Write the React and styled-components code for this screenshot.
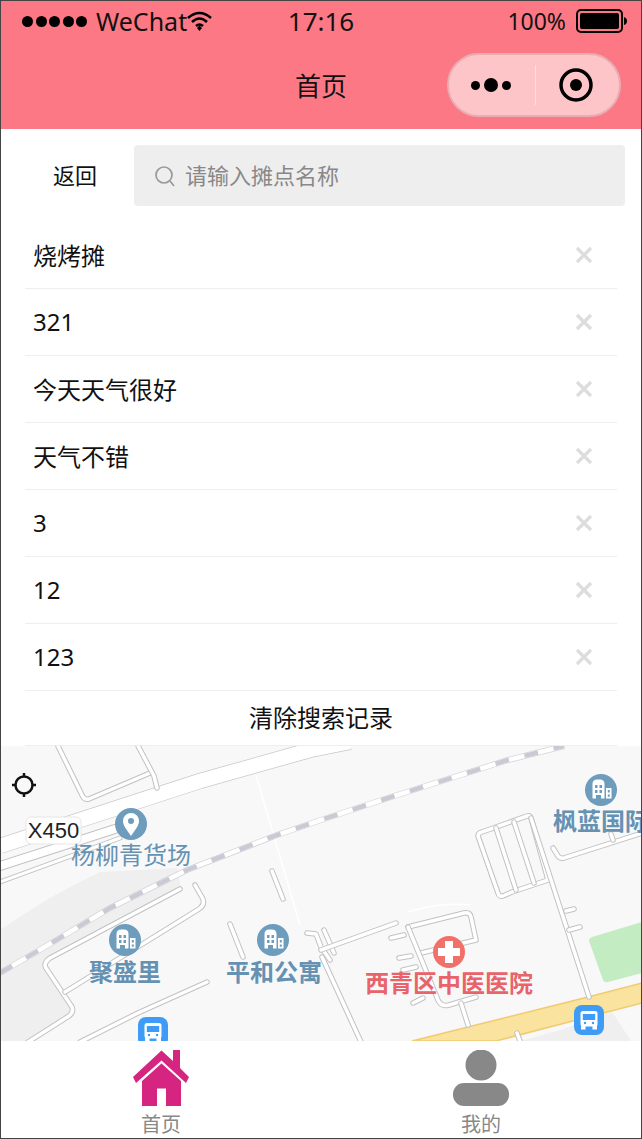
import React from "react";
import styled, { createGlobalStyle } from "styled-components";

const Global = createGlobalStyle`
  html, body { margin: 0; padding: 0; background: #fff; }
  body { font-family: "Noto Sans", "Noto Sans CJK SC", sans-serif; }
`;

const history = ["烧烤摊", "321", "今天天气很好", "天气不错", "3", "12", "123"];

const RAIL = "M0 973L43 948L110 908L187 870L277 835L321 820L388 798L508 760L564 746";

const Road = ({ d, w = 5.5 }) => (
  <>
    <path d={d} fill="none" stroke="#c2c2c4" strokeWidth={w} strokeLinecap="round" strokeLinejoin="round" />
    <path d={d} fill="none" stroke="#fff" strokeWidth={w - 2} strokeLinecap="round" strokeLinejoin="round" />
  </>
);

const Poi = ({ x, y, color = "#6e9cbd", children }) => (
  <g transform={`translate(${x} ${y})`}>
    <circle r="16" fill={color} />
    {children}
  </g>
);

const Building = () => (
  <path
    fill="#fff"
    fillRule="evenodd"
    d="M-8.5 8.5V-6Q-8.5 -10.5 -4 -10.5H-1Q3.5 -10.5 3.5 -6V8.5H0V5H-5V8.5ZM-6 -5V-2H-3.5V-5ZM-1.5 -5V-2H1V-5ZM-6 0V3H-3.5V0ZM-1.5 0V3H1V0ZM5 -2H10.5V8.5H5ZM6.8 0V2.5H8.8V0ZM6.8 4.5V6.8H8.8V4.5Z"
  />
);

const Bus = ({ x, y }) => (
  <g transform={`translate(${x} ${y})`}>
    <rect width="30" height="30" rx="8" fill="#3f9cf6" />
    <rect x="6.5" y="6" width="17" height="15.5" rx="2.5" fill="#fff" />
    <rect x="8.8" y="9" width="12.4" height="6" fill="#3f9cf6" />
    <path d="M7 21H11.5V24.5H7ZM18.5 21H23V24.5H18.5Z" fill="#fff" />
    <circle cx="11" cy="18" r="1.2" fill="#3f9cf6" />
    <circle cx="19" cy="18" r="1.2" fill="#3f9cf6" />
  </g>
);

const MapDrawing = () => (
  <MapSvg viewBox="1 746 640 295">
    <rect x="0" y="745" width="642" height="296" fill="#f8f8f9" />
    <path
      d="M0 930Q50 895 100 872L177 868L181 887L48 958L44 967L73 1008L70 1015L28 1041H0Z"
      fill="#efefef"
    />
    <path d="M521 1041L560 1030L612 1012L631 1041Z" fill="#efefef" />
    <path d="M589 941Q589 938 592 937L642 922V973L608 982Q604 983 603 980Z" fill="#c3ecc2" />
    <path d="M412 1041L588 997L642 983V1003L496 1041Z" fill="#fae29f" stroke="#f0cb70" strokeWidth="1.5" />

    <path d="M0 846L200 781L310 750L350 742" fill="none" stroke="#c8c8ca" strokeWidth="16" />
    <path d="M0 846L200 781L310 750L350 742" fill="none" stroke="#fff" strokeWidth="14.5" />
    <path d="M256 775L300 925" fill="none" stroke="#fff" strokeWidth="1.5" />
    <path d="M408 912Q440 902 470 905" fill="none" stroke="#fff" strokeWidth="1.5" />

    <Road d="M57 744L83 797Q85 800 89 799L150 773" />
    <Road d="M137 744L154 776L157 788" />
    <Road d="M0 866L115 829" w={10} />
    <Road d="M0 882L120 838" w={5} />
    <Road d="M180 889L50 958Q43 963 46 968L72 1007Q74 1012 69 1016L28 1042" />
    <Road d="M195 885L203 899Q205 905 199 909L65 992" />
    <Road d="M207 982L138 1013L80 1042" />
    <Road d="M272 871L283 899" />
    <Road d="M230 924L243 957" />
    <Road d="M307 933L316 934L321 947L330 960" />
    <Road d="M324 930L334 953" />
    <Road d="M321 950L396 923" />
    <Road d="M322 957L361 1042" />
    <Road d="M391 938L404 935" />
    <Road d="M399 958L411 956" />
    <Road d="M403 970L416 967" />
    <Road d="M413 1003L423 998" />
    <Road d="M408 927L464 913Q470 912 471 917L476 940L421 953" />
    <Road d="M408 927L438 1000Q441 1007 449 1005L476 997" />
    <Road d="M461 1003L468 1025" />
    <Road d="M478 836Q478 833 482 832L527 816Q530 815 531 818L548 880L512 892L503 896Q499 897 498 893Z" />
    <Road d="M496 828L516 890" />
    <Road d="M514 822L534 883" />
    <Road d="M531 818L589 997" />
    <Road d="M566 911L574 909" />
    <Road d="M569 930L580 927" />
    <Road d="M553 848L558 856Q560 859 564 858L642 833" />
    <Road d="M611 834L613 840" />
    <Road d="M520 1041L517 1033" />

    <path d={RAIL} fill="none" stroke="#d4d4d8" strokeWidth="6" />
    <path d={RAIL} fill="none" stroke="#fff" strokeWidth="4.5" />
    <path d={RAIL} fill="none" stroke="#c9cad3" strokeWidth="4.5" strokeDasharray="14 16" />

    <g fill="none" stroke="#111" strokeWidth="2.5">
      <circle cx="24" cy="785" r="8.5" />
      <path d="M24 773V777M24 793V797M12 785H16M32 785H36" />
    </g>

    <rect x="26" y="817" width="55" height="27" rx="5" fill="#fff" stroke="#e6e6e6" />
    <BadgeText x="53.5" y="838">X450</BadgeText>

    <Poi x={131} y={824}>
      <path
        fill="#fff"
        fillRule="evenodd"
        d="M0 12C-5 5 -8 1 -8 -3A8 8 0 0 1 8 -3C8 1 5 5 0 12ZM0 -6A3 3 0 1 0 0 0A3 3 0 1 0 0 -6Z"
      />
    </Poi>
    <MapLabel x="131" y="864">杨柳青货场</MapLabel>

    <Poi x={125} y={940}><Building /></Poi>
    <MapLabel x="125" y="981" $bold>聚盛里</MapLabel>

    <Poi x={273} y={940}><Building /></Poi>
    <MapLabel x="274" y="981" $bold>平和公寓</MapLabel>

    <Poi x={601} y={790}><Building /></Poi>
    <MapLabel x="601" y="830" $bold>枫蓝国际</MapLabel>

    <Poi x={449} y={952} color="#f2706a">
      <path fill="#fff" d="M-4 -11H4V-4H11V4H4V11H-4V4H-11V-4H-4Z" />
    </Poi>
    <MapLabel x="449" y="992" $bold $red>西青区中医医院</MapLabel>

    <Bus x={138} y={1017} />
    <Bus x={574} y={1005} />
  </MapSvg>
);

const HomeIcon = () => (
  <TabSvg viewBox="0 0 56 56">
    <path fill="#d62580" d="M0 27L28.5 0.5L40 11V0H47V18L56 27L53 33L28.5 10.5L3 33Z" />
    <path fill="#d62580" d="M9 31L28.5 13.5L48 31V56H33V38.5H24V56H9Z" />
  </TabSvg>
);

const PersonIcon = () => (
  <TabSvg viewBox="0 0 56 56">
    <circle cx="28" cy="15" r="15.5" fill="#888" />
    <rect x="0" y="33" width="56" height="23" rx="11" fill="#888" />
  </TabSvg>
);

export default function App() {
  return (
    <Frame>
      <Global />
      <Header>
        <StatusBar>
          <Carrier>
            <Signal>
              {[0, 1, 2, 3, 4].map((i) => (
                <SignalDot key={i} />
              ))}
            </Signal>
            <span>WeChat</span>
            <svg width="25" height="20" viewBox="0 0 25 20">
              <path d="M1 7Q12.5 -3 24 7M5 11Q12.5 4 20 11M9 15Q12.5 12 16 15" fill="none" stroke="#000" strokeWidth="2.6" />
              <path d="M10 17L12.5 14.5L15 17L12.5 20Z" fill="#000" />
            </svg>
          </Carrier>
          <Clock>17:16</Clock>
          <Power>
            <span>100%</span>
            <svg width="51" height="24" viewBox="0 0 51 24">
              <rect x="1" y="1" width="45" height="22" rx="4" fill="none" stroke="#000" strokeWidth="2" />
              <rect x="4" y="4" width="39" height="16" rx="2" fill="#000" />
              <path d="M48 8Q51 9 51 12Q51 15 48 16Z" fill="#000" />
            </svg>
          </Power>
        </StatusBar>
        <NavBar>
          <span />
          <NavTitle>首页</NavTitle>
          <Capsule>
            <Dots>
              <Dot $size={9} />
              <Dot $size={14} />
              <Dot $size={9} />
            </Dots>
            <CapsuleLine />
            <svg width="34" height="34" viewBox="0 0 34 34">
              <circle cx="17" cy="17" r="15" fill="none" stroke="#000" strokeWidth="3.5" />
              <circle cx="17" cy="17" r="6" fill="#000" />
            </svg>
          </Capsule>
        </NavBar>
      </Header>

      <SearchRow>
        <BackLink>返回</BackLink>
        <SearchBox>
          <svg width="24" height="24" viewBox="0 0 24 24">
            <circle cx="11" cy="11" r="8" fill="none" stroke="#999" strokeWidth="1.7" />
            <path d="M17 17L21 22" stroke="#999" strokeWidth="1.7" />
          </svg>
          <SearchHint>请输入摊点名称</SearchHint>
        </SearchBox>
      </SearchRow>

      <HistoryList>
        {history.map((item) => (
          <HistoryRow key={item}>
            <span>{item}</span>
            <svg width="18" height="18" viewBox="0 0 18 18">
              <path d="M2 2L16 16M16 2L2 16" stroke="#ddd" strokeWidth="3.2" />
            </svg>
          </HistoryRow>
        ))}
      </HistoryList>
      <ClearRow>清除搜索记录</ClearRow>

      <MapArea>
        <MapDrawing />
      </MapArea>

      <TabBar>
        <Tab>
          <HomeIcon />
          <TabLabel>首页</TabLabel>
        </Tab>
        <Tab>
          <PersonIcon />
          <TabLabel>我的</TabLabel>
        </Tab>
      </TabBar>
    </Frame>
  );
}

const Frame = styled.div`
  width: 642px;
  height: 1139px;
  box-sizing: border-box;
  border: 1px solid #444;
  display: flex;
  flex-direction: column;
  overflow: hidden;
  background: #fff;
  color: #111;
`;

const Header = styled.header`
  height: 128px;
  flex: none;
  background: #fd7885;
  display: flex;
  flex-direction: column;
`;

const StatusBar = styled.div`
  height: 44px;
  box-sizing: border-box;
  padding: 0 14px 4px 21px;
  display: grid;
  grid-template-columns: 1fr auto 1fr;
  align-items: center;
  font-size: 25px;
`;

const Carrier = styled.div`
  display: flex;
  align-items: center;
  gap: 9px;
  svg { margin-left: -9px; }
`;

const Signal = styled.div`
  display: flex;
  gap: 2.5px;
`;

const SignalDot = styled.i`
  width: 11px;
  height: 11px;
  border-radius: 50%;
  background: #000;
`;

const Clock = styled.div`
  font-size: 26px;
  margin-left: -7px;
`;

const Power = styled.div`
  display: flex;
  align-items: center;
  justify-content: flex-end;
  gap: 10px;
  font-size: 23px;
`;

const NavBar = styled.div`
  flex: 1;
  padding: 8px 20px 12px;
  display: grid;
  grid-template-columns: 1fr auto 1fr;
  align-items: center;
`;

const NavTitle = styled.div`
  font-size: 26px;
`;

const Capsule = styled.div`
  justify-self: end;
  width: 174px;
  height: 64px;
  box-sizing: border-box;
  border: 2px solid #e8aeb4;
  border-radius: 32px;
  background: #fec5c9;
  display: flex;
  align-items: center;
  padding: 0 26px 0 22px;
  justify-content: space-between;
`;

const Dots = styled.div`
  display: flex;
  align-items: center;
  gap: 4px;
`;

const Dot = styled.i`
  width: ${(p) => p.$size}px;
  height: ${(p) => p.$size}px;
  border-radius: 50%;
  background: #000;
`;

const CapsuleLine = styled.i`
  width: 1px;
  height: 40px;
  background: #fedcde;
`;

const SearchRow = styled.div`
  height: 93px;
  flex: none;
  box-sizing: border-box;
  padding: 16px 16px 16px 0;
  display: flex;
  align-items: flex-start;
`;

const BackLink = styled.div`
  width: 133px;
  height: 61px;
  line-height: 61px;
  padding-left: 15px;
  box-sizing: border-box;
  text-align: center;
  font-size: 22px;
`;

const SearchBox = styled.div`
  flex: 1;
  height: 61px;
  border-radius: 4px;
  background: #eee;
  display: flex;
  align-items: center;
  padding-left: 19px;
  gap: 8px;
`;

const SearchHint = styled.span`
  font-size: 22px;
  color: #888;
  margin-top: -3px;
`;

const HistoryList = styled.div`
  flex: none;
  margin: 0 24px;
`;

const HistoryRow = styled.div`
  height: 67px;
  box-sizing: border-box;
  border-bottom: 1px solid #eee;
  padding: 0 24px 0 8px;
  display: flex;
  align-items: center;
  justify-content: space-between;
  font-size: 24px;
  span { margin-top: -2px; }
`;

const ClearRow = styled.div`
  height: 55px;
  flex: none;
  box-sizing: border-box;
  margin: 0 24px;
  border-bottom: 1px solid #eee;
  text-align: center;
  line-height: 54px;
  font-size: 24px;
`;

const MapArea = styled.div`
  flex: 1;
  min-height: 0;
  overflow: hidden;
`;

const MapSvg = styled.svg`
  display: block;
  width: 640px;
  height: 295px;
`;

const BadgeText = styled.text`
  font-family: "Liberation Sans", sans-serif;
  font-size: 22px;
  fill: #222;
  text-anchor: middle;
`;

const MapLabel = styled.text`
  font-family: "Noto Sans CJK SC", sans-serif;
  font-size: 24px;
  font-weight: ${(p) => (p.$bold ? 700 : 400)};
  fill: ${(p) => (p.$red ? "#e8636a" : "#6592b2")};
  text-anchor: middle;
`;

const TabBar = styled.nav`
  height: 97px;
  flex: none;
  background: #fff;
  display: grid;
  grid-template-columns: 1fr 1fr;
`;

const Tab = styled.div`
  display: flex;
  flex-direction: column;
  align-items: center;
  padding-top: 9px;
`;

const TabSvg = styled.svg`
  width: 56px;
  height: 56px;
  display: block;
  filter: blur(0.6px);
`;

const TabLabel = styled.span`
  margin-top: 5px;
  font-size: 20px;
  line-height: 28px;
  color: #888;
`;
